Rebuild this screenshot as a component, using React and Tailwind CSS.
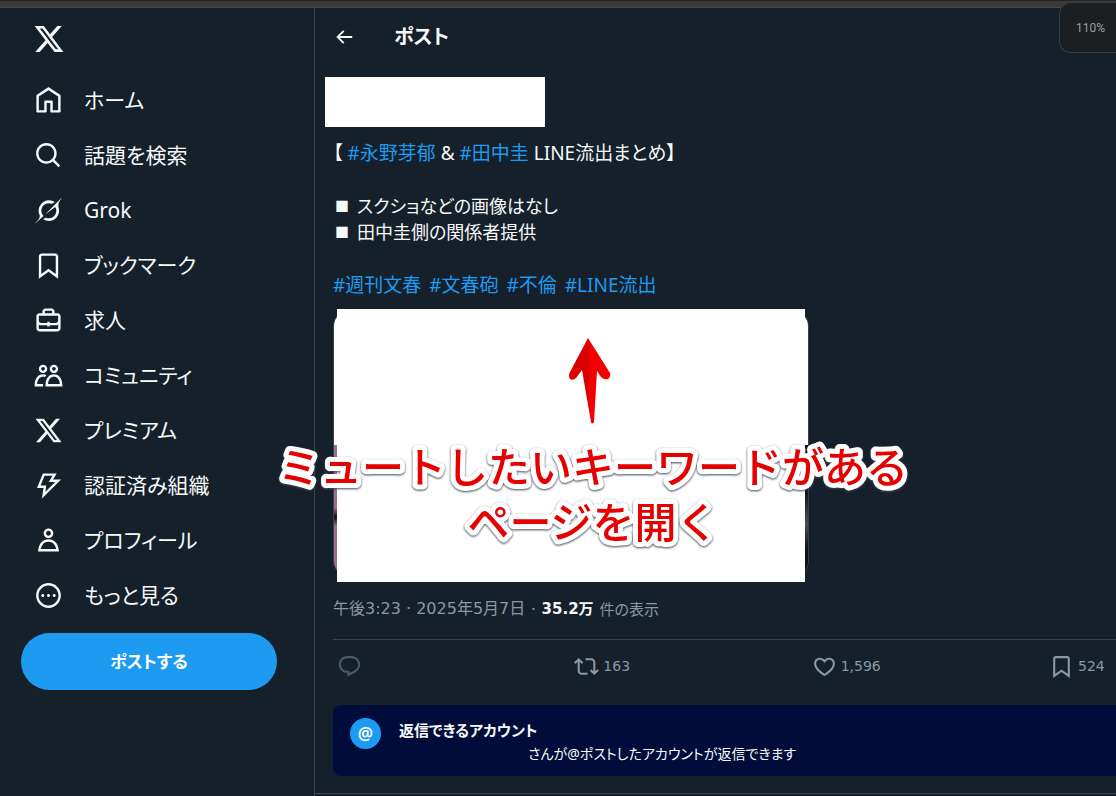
const ICONS = {
  x: "M18.244 2.25h3.308l-7.227 8.26 8.502 11.24H16.17l-5.214-6.817L4.99 21.75H1.68l7.73-8.835L1.254 2.25H8.08l4.713 6.231zm-1.161 17.52h1.833L7.084 4.126H5.117z",
  home: "M21.591 7.146L12.52 1.157c-.316-.21-.724-.21-1.04 0l-9.071 5.99c-.26.173-.409.456-.409.757v13.183c0 .502.418.913.929.913h6.638c.511 0 .929-.41.929-.913v-7.075h3.008v7.075c0 .502.418.913.929.913h6.639c.51 0 .928-.41.928-.913V7.904c0-.301-.158-.584-.408-.758zM20 20l-4.5.01.011-7.097c0-.502-.418-.913-.928-.913H9.44c-.511 0-.929.41-.929.913L8.5 20H4V8.773l8.011-5.342L20 8.764z",
  search:
    "M10.25 3.75c-3.59 0-6.5 2.91-6.5 6.5s2.91 6.5 6.5 6.5c1.795 0 3.419-.726 4.596-1.904 1.178-1.177 1.904-2.801 1.904-4.596 0-3.59-2.91-6.5-6.5-6.5zm-8.5 6.5c0-4.694 3.806-8.5 8.5-8.5s8.5 3.806 8.5 8.5c0 1.986-.682 3.815-1.824 5.262l4.781 4.781-1.414 1.414-4.781-4.781c-1.447 1.142-3.276 1.824-5.262 1.824-4.694 0-8.5-3.806-8.5-8.5z",
  grok: "M12.745 20.54l10.97-8.19c.539-.4 1.307-.244 1.564.38 1.349 3.288.746 7.241-1.938 9.955-2.683 2.714-6.417 3.31-9.83 1.954l-3.728 1.745c5.347 3.697 11.84 2.782 15.898-1.324 3.219-3.255 4.216-7.692 3.284-11.693l.008.009c-1.351-5.878.332-8.227 3.782-13.031L33 0l-4.54 4.59v-.014L12.743 20.544m-2.263 1.987c-3.837-3.707-3.175-9.446.1-12.755 2.42-2.449 6.388-3.448 9.852-1.979l3.72-1.737c-.67-.49-1.53-1.017-2.515-1.387-4.455-1.854-9.789-.931-13.41 2.728-3.483 3.523-4.579 8.94-2.697 13.561 1.405 3.454-.899 5.898-3.22 8.364C1.49 30.2.666 31.074 0 32l10.478-9.466",
  bookmark:
    "M4 4.5C4 3.12 5.119 2 6.5 2h11C18.881 2 20 3.12 20 4.5v18.44l-8-5.71-8 5.71V4.5zM6.5 4c-.276 0-.5.22-.5.5v14.56l6-4.29 6 4.29V4.5c0-.28-.224-.5-.5-.5h-11z",
  jobs: "M19.5 6H17V4.5C17 3.12 15.88 2 14.5 2h-5C8.12 2 7 3.12 7 4.5V6H4.5C3.12 6 2 7.12 2 8.5v10C2 19.88 3.12 21 4.5 21h15c1.38 0 2.5-1.12 2.5-2.5v-10C22 7.12 20.88 6 19.5 6zM9 4.5c0-.28.23-.5.5-.5h5c.28 0 .5.22.5.5V6H9V4.5zm11 14c0 .28-.22.5-.5.5h-15c-.27 0-.5-.22-.5-.5v-3.04c.59.35 1.27.54 2 .54h5v1h2v-1h5c.73 0 1.41-.19 2-.54v3.04zm0-6.49c0 1.1-.9 1.99-2 1.99h-5v-1h-2v1H6c-1.1 0-2-.9-2-2V8.5c0-.28.23-.5.5-.5h15c.28 0 .5.22.5.5v3.51z",
  communities:
    "M7.501 19.917L7.471 21H.472l.029-1.027c.184-6.618 3.736-8.977 7-8.977.963 0 1.95.212 2.87.672-.444.478-.851 1.03-1.212 1.656-.507-.204-1.054-.329-1.658-.329-2.767 0-4.57 2.223-4.938 6.004H7.56c-.023.302-.05.599-.059.918zm15.998.056L23.528 21H9.472l.029-1.027c.184-6.618 3.736-8.977 7-8.977s6.816 2.358 7 8.977zM21.437 19c-.367-3.781-2.17-6.004-4.938-6.004s-4.57 2.223-4.938 6.004h9.875zm-4.938-9c-.799 0-1.527-.279-2.116-.73-.836-.64-1.384-1.638-1.384-2.77 0-1.93 1.567-3.5 3.5-3.5s3.5 1.57 3.5 3.5c0 1.132-.548 2.13-1.384 2.77-.589.451-1.317.73-2.116.73zm-1.5-3.5c0 .827.673 1.5 1.5 1.5s1.5-.673 1.5-1.5-.673-1.5-1.5-1.5-1.5.673-1.5 1.5zM7.5 3C9.433 3 11 4.57 11 6.5S9.433 10 7.5 10 4 8.43 4 6.5 5.567 3 7.5 3zm0 2C6.673 5 6 5.673 6 6.5S6.673 8 7.5 8 9 7.327 9 6.5 8.327 5 7.5 5z",
  verified:
    "M7.323 2h11.443l-3 5h6.648L6.586 22.83 7.847 14H2.523l4.8-12zm1.354 2l-3.2 8h4.676l-.739 5.17L17.586 9h-5.352l3-5H8.677z",
  profile:
    "M5.651 19h12.698c-.337-1.8-1.023-3.21-1.945-4.19C15.318 13.65 13.838 13 12 13s-3.317.65-4.404 1.81c-.922.98-1.608 2.39-1.945 4.19zm.486-5.56C7.627 11.85 9.648 11 12 11s4.373.85 5.863 2.44c1.477 1.58 2.366 3.8 2.632 6.46l.11 1.1H3.395l.11-1.1c.266-2.66 1.155-4.88 2.632-6.46zM12 4c-1.105 0-2 .9-2 2s.895 2 2 2 2-.9 2-2-.895-2-2-2zM8 6c0-2.21 1.791-4 4-4s4 1.79 4 4-1.791 4-4 4-4-1.79-4-4z",
  more: "M3.75 12c0-4.56 3.69-8.25 8.25-8.25s8.25 3.69 8.25 8.25-3.69 8.25-8.25 8.25S3.75 16.56 3.75 12zM12 1.75C6.34 1.75 1.75 6.34 1.75 12S6.34 22.25 12 22.25 22.25 17.66 22.25 12 17.66 1.75 12 1.75zm-4.75 11.5c.69 0 1.25-.56 1.25-1.25s-.56-1.25-1.25-1.25S6 11.31 6 12s.56 1.25 1.25 1.25zm9.5 0c.69 0 1.25-.56 1.25-1.25s-.56-1.25-1.25-1.25-1.25.56-1.25 1.25.56 1.25 1.25 1.25zM13.25 12c0 .69-.56 1.25-1.25 1.25s-1.25-.56-1.25-1.25.56-1.25 1.25-1.25 1.25.56 1.25 1.25z",
  back: "M7.414 13l5.043 5.04-1.414 1.42L3.586 12l7.457-7.46 1.414 1.42L7.414 11H21v2H7.414z",
  reply:
    "M1.751 10c0-4.42 3.584-8 8.005-8h4.366c4.49 0 8.129 3.64 8.129 8.13 0 2.96-1.607 5.68-4.196 7.11l-8.054 4.46v-3.69h-.067c-4.49.1-8.183-3.51-8.183-8.01zm8.005-6c-3.317 0-6.005 2.69-6.005 6 0 3.37 2.77 6.08 6.138 6.01l.351-.01h1.761v2.3l5.087-2.81c1.951-1.08 3.163-3.13 3.163-5.36 0-3.39-2.744-6.13-6.129-6.13H9.756z",
  repost:
    "M4.5 3.88l4.432 4.14-1.364 1.46L5.5 7.55V16c0 1.1.896 2 2 2H13v2H7.5c-2.209 0-4-1.79-4-4V7.55L1.432 9.48.068 8.02 4.5 3.88zM16.5 6H11V4h5.5c2.209 0 4 1.79 4 4v8.45l2.068-1.93 1.364 1.46-4.432 4.14-4.432-4.14 1.364-1.46 2.068 1.93V8c0-1.1-.896-2-2-2z",
  like: "M16.697 5.5c-1.222-.06-2.679.51-3.89 2.16l-.805 1.09-.806-1.09C9.984 6.01 8.526 5.44 7.304 5.5c-1.243.07-2.349.78-2.91 1.91-.552 1.12-.633 2.78.479 4.82 1.074 1.97 3.257 4.27 7.129 6.61 3.87-2.34 6.052-4.64 7.126-6.61 1.111-2.04 1.03-3.7.477-4.82-.561-1.13-1.666-1.84-2.908-1.91zm4.187 7.69c-1.351 2.48-4.001 5.12-8.379 7.67l-.503.3-.504-.3c-4.379-2.55-7.029-5.19-8.382-7.67-1.36-2.5-1.41-4.86-.514-6.67.887-1.79 2.647-2.91 4.601-3.01 1.651-.09 3.368.56 4.798 2.01 1.429-1.45 3.146-2.1 4.796-2.01 1.954.1 3.714 1.22 4.601 3.01.896 1.81.846 4.17-.514 6.67z",
};

const NAV_ITEMS = [
  { icon: "home", label: "ホーム" },
  { icon: "search", label: "話題を検索" },
  { icon: "grok", label: "Grok" },
  { icon: "bookmark", label: "ブックマーク" },
  { icon: "jobs", label: "求人" },
  { icon: "communities", label: "コミュニティ" },
  { icon: "x", label: "プレミアム" },
  { icon: "verified", label: "認証済み組織" },
  { icon: "profile", label: "プロフィール" },
];

function Icon({ name, className }) {
  return (
    <svg
      viewBox={name === "grok" ? "-1 -1 35 34" : "0 0 24 24"}
      className={className}
      fill="currentColor"
      aria-hidden="true"
    >
      <path d={ICONS[name]} />
    </svg>
  );
}

function Sidebar() {
  return (
    <header className="w-[315px] shrink-0 border-r border-[#38444d] pl-[21px]">
      <a href="#home" aria-label="X" className="flex h-[61px] items-center pl-3">
        <Icon name="x" className="size-8" />
      </a>
      <nav className="mt-1 flex flex-col">
        {NAV_ITEMS.map((item) => (
          <a
            key={item.label}
            href={`#${item.icon}`}
            className="flex h-[55px] items-center gap-[21px] pl-[13px] text-[21px]"
          >
            <Icon name={item.icon} className="size-[29px]" />
            <span>{item.label}</span>
          </a>
        ))}
        <button className="flex h-[55px] items-center gap-[21px] pl-[13px] text-[21px]">
          <Icon name="more" className="size-[29px]" />
          <span>もっと見る</span>
        </button>
      </nav>
      <button className="mt-[10px] h-[57px] w-[256px] rounded-full bg-[#1d9bf0] text-[17px] font-bold text-white">
        ポストする
      </button>
    </header>
  );
}

function Tag({ children }) {
  return (
    <a href="#tag" className="text-[#1d9bf0] hover:underline">
      {children}
    </a>
  );
}

function Action({ icon, count, label, className = "flex-1" }) {
  return (
    <div className={className}>
      <button aria-label={label} className="flex items-center gap-1">
        <Icon name={icon} className="size-[25px]" />
        <span className="font-['DejaVu_Sans',sans-serif] text-[14px]">{count}</span>
      </button>
    </div>
  );
}

// Red arrow and outlined caption that lie over the attached media
function Callout() {
  return (
    <svg
      viewBox="0 0 640 220"
      className="absolute top-[29px] -left-[60px] h-[220px] w-[640px] font-['Noto_Sans_CJK_JP',sans-serif]"
    >
      <defs>
        <linearGradient id="arrow">
          <stop offset="0.46" stopColor="#d90000" />
          <stop offset="0.52" stopColor="#f40000" />
        </linearGradient>
      </defs>
      <path
        d="M315 0L337 35Q338 39 335 41Q331 42 328 39L324 33L321 84Q319 87 318 84L309 32L303 40Q300 43 297 41Q295 38 297 34Z"
        fill="url(#arrow)"
      />
      <g
        textAnchor="middle"
        fill="#e60000"
        stroke="#ffffff"
        strokeWidth="10"
        strokeLinejoin="round"
        className="text-[42px] font-medium [paint-order:stroke] [font-feature-settings:normal] drop-shadow-[0_1px_1px_#3c4650]"
      >
        <text x="320" y="145">ミュートしたいキーワードがある</text>
        <text x="320" y="200">ページを開く</text>
      </g>
    </svg>
  );
}

function Media() {
  return (
    <div className="relative w-[476px] pt-px">
      <div className="flex h-[267px] flex-col overflow-hidden rounded-2xl border border-[#38444d]">
        <div className="h-[134px] bg-white" />
        <div className="flex flex-1 justify-between">
          <div className="w-1/2 bg-linear-to-b from-[#9a7086] from-48% via-[#111111] via-55% to-[#9a7086] to-62%" />
          <div className="w-1/2 bg-linear-to-b from-[#15171a] from-38% via-[#4b4f54] via-60% to-[#111111] to-80%" />
        </div>
      </div>
      <div className="absolute top-0 left-1 h-[273px] w-[468px] bg-white" />
      <Callout />
    </div>
  );
}

function Post() {
  return (
    <main className="min-w-0 flex-1">
      <div className="flex h-[58px] items-center gap-[39px] pl-[18px]">
        <button aria-label="戻る">
          <Icon name="back" className="size-[22px]" />
        </button>
        <h1 className="text-[20px] font-bold">ポスト</h1>
      </div>

      <article className="border-b border-[#38444d] pb-[17px] pl-[18px]">
        <div className="mt-[11px] -ml-2 h-[50px] w-[220px] bg-white" />

        <div className="mt-[13px] flex flex-col gap-[27px] text-[19px] leading-[26px] whitespace-nowrap">
          <p>
            【 <Tag>#永野芽郁</Tag> &amp; <Tag>#田中圭</Tag> LINE流出まとめ】
          </p>
          <ul className="text-[18px]">
            <li className="flex">
              <span className="w-6 pl-[2px] text-[14px]">■</span>スクショなどの画像はなし
            </li>
            <li className="flex">
              <span className="w-6 pl-[2px] text-[14px]">■</span>田中圭側の関係者提供
            </li>
          </ul>
          <p className="flex gap-2">
            <Tag>#週刊文春</Tag>
            <Tag>#文春砲</Tag>
            <Tag>#不倫</Tag>
            <Tag>#LINE流出</Tag>
          </p>
        </div>

        <div className="mt-[11px]">
          <Media />
        </div>

        <div className="mt-[20px] flex h-[24px] items-center gap-[6px] text-[16px] whitespace-nowrap text-[#8b98a5]">
          <a href="#time" className="font-['DejaVu_Sans','Noto_Sans_CJK_JP',sans-serif]">
            午後3:23 · 2025年5月7日
          </a>
          <span>·</span>
          <span className="font-['DejaVu_Sans','Noto_Sans_CJK_JP',sans-serif] text-[15px] font-bold text-[#f7f9f9]">
            35.2万
          </span>
          <span className="text-[15px]">件の表示</span>
        </div>

        <div className="mt-[18px] flex h-[54px] items-center border-t border-[#38444d] pl-1 text-[#8b98a5]">
          <div className="flex flex-1 text-[#4d5a66]">
            <Action icon="reply" label="返信" />
          </div>
          <Action icon="repost" count="163" label="リポスト" />
          <Action icon="like" count="1,596" label="いいね" />
          <Action icon="bookmark" count="524" label="ブックマーク" className="w-[67px]" />
        </div>

        <div className="mt-3 flex h-[71px] gap-[18px] rounded-l-lg bg-[#000d3a] pt-[13px] pl-[17px]">
          <div className="flex size-[31px] items-center justify-center rounded-full bg-[#1d9bf0] text-[17px] leading-none font-semibold text-white">
            @
          </div>
          <div className="whitespace-nowrap">
            <p className="text-[15px] leading-[24px] font-bold">返信できるアカウント</p>
            <p className="pl-[129px] text-[14px] leading-[24px]">
              さんが@ポストしたアカウントが返信できます
            </p>
          </div>
        </div>
      </article>
    </main>
  );
}

export default function App() {
  return (
    <div className="relative flex min-h-screen flex-col overflow-hidden bg-[#15202b] font-['Noto_Sans','Noto_Sans_CJK_JP',sans-serif] text-[#f7f9f9] [font-feature-settings:'palt']">
      <div className="h-2 border-t border-b border-t-[#252526] border-b-[#48484c] bg-[#3b3a3b]" />
      <div className="flex flex-1">
        <Sidebar />
        <Post />
      </div>

      {/* Zoom level popup */}
      <div className="absolute top-[2px] right-0 flex h-[51px] w-[57px] items-center justify-end rounded-l-xl border border-r-0 border-[#3a3f43] bg-[#1b1f21] pr-[11px] font-['Roboto',sans-serif] text-[12px] text-[#9a9ea3]">
        110%
      </div>
    </div>
  );
}
